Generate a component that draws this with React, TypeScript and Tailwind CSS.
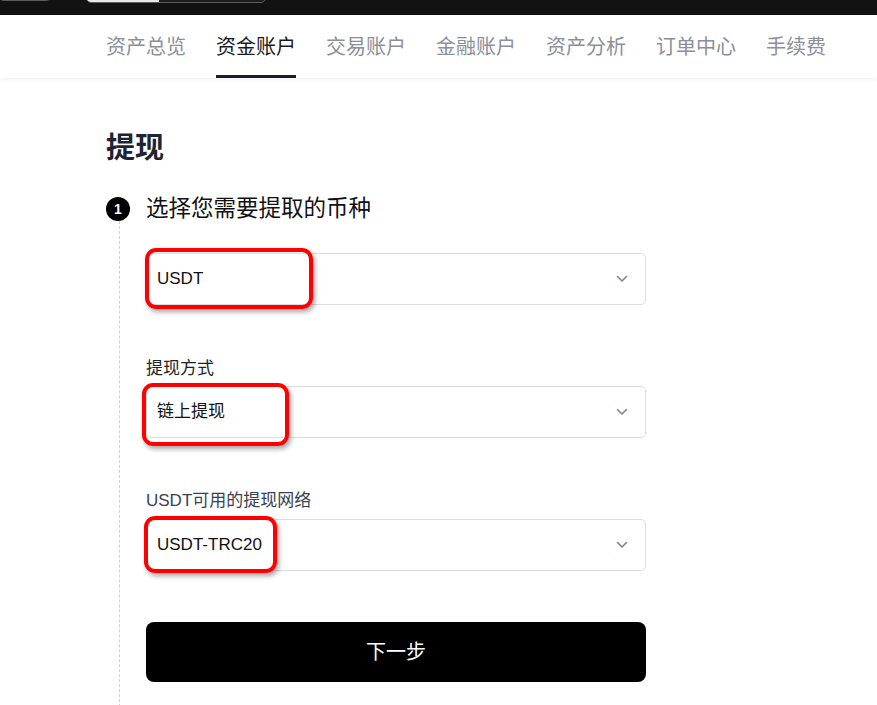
import React from "react";

const font = { fontFamily: '"Liberation Sans", "Noto Sans CJK SC", sans-serif' };

function Chevron() {
  return (
    <svg width="12" height="8" viewBox="0 0 12 8" fill="none">
      <path d="M1.5 1.5 L6 6 L10.5 1.5" stroke="#7b8593" strokeWidth="1.6" strokeLinecap="round" strokeLinejoin="round" />
    </svg>
  );
}

function Select({ text, box }: { text: string; box: { l: number; t: number; w: number; h: number } }) {
  return (
    <div className="relative flex h-[52px] w-[500px] items-center justify-between rounded-[5px] border border-[#dcdcdc] bg-white pl-[10px] pr-[17px]">
      <span className="text-[17px] text-[#111]">{text}</span>
      <Chevron />
      <div
        className="pointer-events-none absolute rounded-[11px] border-[4px] border-[#ff0000] shadow-[2px_3px_5px_rgba(0,0,0,0.35)]"
        style={{ left: box.l, top: box.t, width: box.w, height: box.h }}
      />
    </div>
  );
}

export default function App() {
  const tabs = ["资产总览", "资金账户", "交易账户", "金融账户", "资产分析", "订单中心", "手续费"];
  return (
    <div className="h-[705px] w-[877px] overflow-hidden bg-white" style={font}>
      <div className="relative h-[15px] bg-[#121212]">
        <div className="absolute left-0 top-[-8px] h-[9px] w-[50px] rounded-sm bg-[#5a5a5a]" />
        <div className="absolute left-[86px] top-[-10px] flex h-[13px] w-[180px] overflow-hidden rounded-[5px] border border-[#5c5c5c] bg-[#1c1c1c]">
          <div className="h-full w-[72px] bg-[#e8e8e8]" />
        </div>
      </div>
      <div className="relative z-10 flex h-[63px] items-stretch gap-[30px] bg-white pl-[106px] shadow-[0_2px_4px_rgba(0,0,0,0.05)]">
        {tabs.map((t, i) => (
          <div
            key={t}
            className={
              "flex items-center border-b-[3px] pt-[3px] text-[20px] " +
              (i === 1 ? "border-[#1b1d2b] text-[#1a1a1a]" : "border-transparent text-[#8a8f99]")
            }
          >
            {t}
          </div>
        ))}
      </div>
      <div className="pl-[106px] pt-[50px]">
        <h1 className="text-[29px] font-bold leading-[40px] text-[#1e2433]">提现</h1>
        <div className="mt-[26px] flex items-center gap-[16px]">
          <div className="flex h-[24px] w-[24px] items-center justify-center rounded-full bg-black text-[14px] font-bold text-white">1</div>
          <div className="text-[22.5px] leading-[30px] text-[#111]">选择您需要提取的币种</div>
        </div>
        <div className="ml-[13px] mt-[-3px] flex border-l border-dashed border-[#cfcfcf] pl-[26px] pt-[32px]">
          <div className="flex flex-col pb-[40px]">
            <Select text="USDT" box={{ l: -2, t: -6, w: 168, h: 61 }} />
            <div className="mt-[51px] mb-[5px] text-[17px] leading-[25px] text-[#222]">提现方式</div>
            <Select text="链上提现" box={{ l: -5, t: -4, w: 147, h: 63 }} />
            <div className="mt-[50px] mb-[6px] text-[17px] leading-[25px] text-[#3b4152]">USDT可用的提现网络</div>
            <Select text="USDT-TRC20" box={{ l: -3, t: -4, w: 133, h: 57 }} />
            <button className="mt-[51px] flex h-[60px] w-[500px] items-center justify-center rounded-[8px] bg-black text-[20px] text-white">
              下一步
            </button>
          </div>
        </div>
      </div>
    </div>
  );
}
